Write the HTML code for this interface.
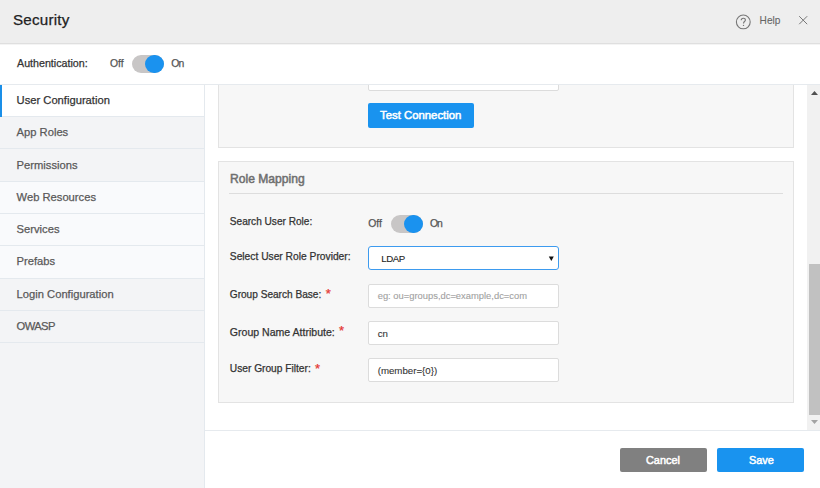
<!DOCTYPE html>
<html><head><meta charset="utf-8"><title>Security</title>
<style>
html,body{-webkit-font-smoothing:antialiased;margin:0;padding:0;width:820px;height:488px;overflow:hidden;background:#fff;font-family:"Liberation Sans", sans-serif;}
.r{position:absolute;}
.t{position:absolute;white-space:pre;line-height:1;}
</style></head><body>
<div class="r" style="left:0px;top:0px;width:820px;height:43px;background:#eeeeee"></div>
<div class="r" style="left:0px;top:43px;width:820px;height:1px;background:#dfdfdf"></div>
<div class="r" style="left:0px;top:44px;width:820px;height:1px;background:#f4f4f4"></div>
<div class="t" style="left:13px;top:12.43px;font-size:15.2px;color:#222;font-weight:400;letter-spacing:0.2px;-webkit-text-stroke:0.25px #222;">Security</div>
<svg class="r" style="left:735px;top:14px" width="17" height="17" viewBox="0 0 17 17"><circle cx="8.3" cy="7.9" r="6.9" fill="none" stroke="#777" stroke-width="1.1"/><path d="M6.2 6.3 C6.2 4.9 7.2 4.2 8.3 4.2 C9.5 4.2 10.4 5 10.4 6.1 C10.4 7.5 8.5 7.6 8.5 9.4" fill="none" stroke="#777" stroke-width="1.1"/><circle cx="8.5" cy="11.4" r="0.7" fill="#777"/></svg>
<div class="t" style="left:759.6px;top:16.15px;font-size:10.1px;color:#666;font-weight:400;-webkit-text-stroke:0.1px #666;">Help</div>
<svg class="r" style="left:798px;top:15px" width="11" height="11" viewBox="0 0 11 11"><path d="M1.2 1.2 L9.2 9.2 M9.2 1.2 L1.2 9.2" stroke="#777" stroke-width="1" fill="none"/></svg>
<div class="r" style="left:0px;top:84px;width:820px;height:1px;background:#e6eaee"></div>
<div class="t" style="left:17px;top:57.84px;font-size:10.7px;color:#333;font-weight:400;-webkit-text-stroke:0.25px #333;">Authentication:</div>
<div class="t" style="left:110px;top:59.00px;font-size:10.4px;color:#555;font-weight:400;-webkit-text-stroke:0.25px #555;">Off</div>
<div class="r" style="left:131.5px;top:55px;width:32.0px;height:18px;background:#c8c6c6;border-radius:9px"></div>
<div class="r" style="left:145.0px;top:54.8px;width:18.599999999999994px;height:18.60000000000001px;background:#1a92ef;border-radius:50%"></div>
<div class="t" style="left:171.3px;top:59.00px;font-size:10.4px;color:#555;font-weight:400;letter-spacing:-1.0px;-webkit-text-stroke:0.25px #555;">On</div>
<div class="r" style="left:0px;top:85px;width:204px;height:403px;background:#f3f4f6"></div>
<div class="r" style="left:204px;top:85px;width:1px;height:403px;background:#e4e9ee"></div>
<div class="r" style="left:0px;top:85px;width:204px;height:31px;background:#ffffff"></div>
<div class="r" style="left:0px;top:116px;width:204px;height:1px;background:#e4e9ee"></div>
<div class="t" style="left:16.6px;top:95.12px;font-size:11.2px;color:#333;font-weight:400;-webkit-text-stroke:0.25px #333;">User Configuration</div>
<div class="r" style="left:0px;top:117px;width:204px;height:31px;background:#f3f4f6"></div>
<div class="r" style="left:0px;top:148px;width:204px;height:1px;background:#e4e9ee"></div>
<div class="t" style="left:16.6px;top:127.37px;font-size:11.2px;color:#595959;font-weight:400;-webkit-text-stroke:0.25px #595959;">App Roles</div>
<div class="r" style="left:0px;top:149px;width:204px;height:32px;background:#f3f4f6"></div>
<div class="r" style="left:0px;top:181px;width:204px;height:1px;background:#e4e9ee"></div>
<div class="t" style="left:16.6px;top:159.62px;font-size:11.2px;color:#595959;font-weight:400;-webkit-text-stroke:0.25px #595959;">Permissions</div>
<div class="r" style="left:0px;top:182px;width:204px;height:31px;background:#f9fafc"></div>
<div class="r" style="left:0px;top:213px;width:204px;height:1px;background:#e4e9ee"></div>
<div class="t" style="left:16.6px;top:191.87px;font-size:11.2px;color:#595959;font-weight:400;-webkit-text-stroke:0.25px #595959;">Web Resources</div>
<div class="r" style="left:0px;top:214px;width:204px;height:31px;background:#f9fafc"></div>
<div class="r" style="left:0px;top:245px;width:204px;height:1px;background:#e4e9ee"></div>
<div class="t" style="left:16.6px;top:224.12px;font-size:11.2px;color:#595959;font-weight:400;-webkit-text-stroke:0.25px #595959;">Services</div>
<div class="r" style="left:0px;top:246px;width:204px;height:32px;background:#f9fafc"></div>
<div class="r" style="left:0px;top:278px;width:204px;height:1px;background:#e4e9ee"></div>
<div class="t" style="left:16.6px;top:256.37px;font-size:11.2px;color:#595959;font-weight:400;-webkit-text-stroke:0.25px #595959;">Prefabs</div>
<div class="r" style="left:0px;top:279px;width:204px;height:31px;background:#f3f4f6"></div>
<div class="r" style="left:0px;top:310px;width:204px;height:1px;background:#e4e9ee"></div>
<div class="t" style="left:16.6px;top:288.62px;font-size:11.2px;color:#595959;font-weight:400;-webkit-text-stroke:0.25px #595959;">Login Configuration</div>
<div class="r" style="left:0px;top:311px;width:204px;height:31px;background:#f3f4f6"></div>
<div class="r" style="left:0px;top:342px;width:204px;height:1px;background:#e4e9ee"></div>
<div class="t" style="left:16.6px;top:320.87px;font-size:11.2px;color:#595959;font-weight:400;letter-spacing:-0.6px;-webkit-text-stroke:0.25px #595959;">OWASP</div>
<div class="r" style="left:0px;top:85px;width:2px;height:32px;background:#1a8fe8"></div>
<div class="r" style="left:205px;top:85px;width:602px;height:345px;background:#fff"></div>
<div class="r" style="left:0;top:85px;width:820px;height:63px;overflow:hidden"><div class="r" style="left:218px;top:-25px;width:576px;height:88px;background:#f7f7f7;border:1px solid #e3e3e3;box-sizing:border-box"></div>
<div class="r" style="left:368px;top:-18px;width:191px;height:24px;background:#fff;border:1px solid #dcdcdc;border-radius:2px;box-sizing:border-box"></div>
</div><div class="r" style="left:368px;top:103.2px;width:106px;height:24.39999999999999px;background:#1993ef;border-radius:2px"></div>
<div class="t" style="left:380px;top:109.69px;font-size:11.35px;color:#fff;font-weight:400;-webkit-text-stroke:0.5px #fff;">Test Connection</div>
<div class="r" style="left:218px;top:161px;width:576px;height:242px;background:#f7f7f7;border:1px solid #e3e3e3;box-sizing:border-box"></div>
<div class="t" style="left:230px;top:173.16px;font-size:12.1px;color:#6f6f6f;font-weight:400;-webkit-text-stroke:0.5px #6f6f6f;">Role Mapping</div>
<div class="r" style="left:229px;top:193px;width:554px;height:1px;background:#dddddd"></div>
<div class="t" style="left:229.8px;top:217.35px;font-size:10.1px;color:#333;font-weight:400;-webkit-text-stroke:0.25px #333;">Search User Role:</div>
<div class="t" style="left:368.2px;top:218.80px;font-size:10.4px;color:#555;font-weight:400;-webkit-text-stroke:0.25px #555;">Off</div>
<div class="r" style="left:390.5px;top:215px;width:32.0px;height:18px;background:#c8c6c6;border-radius:9px"></div>
<div class="r" style="left:404.0px;top:214.8px;width:18.600000000000023px;height:18.599999999999994px;background:#1a92ef;border-radius:50%"></div>
<div class="t" style="left:430px;top:218.80px;font-size:10.4px;color:#555;font-weight:400;letter-spacing:-1.0px;-webkit-text-stroke:0.25px #555;">On</div>
<div class="t" style="left:229.8px;top:252.12px;font-size:10.25px;color:#333;font-weight:400;-webkit-text-stroke:0.25px #333;">Select User Role Provider:</div>
<div class="r" style="left:368px;top:246px;width:191px;height:24px;background:#fff;border:1.5px solid #3d9bef;border-radius:3px;box-sizing:border-box"></div>
<div class="t" style="left:381.2px;top:253.99px;font-size:9.7px;color:#222;font-weight:400;letter-spacing:-0.45px;-webkit-text-stroke:0.1px #222;">LDAP</div>
<svg class="r" style="left:547.5px;top:255.5px" width="7" height="6" viewBox="0 0 7 6"><path d="M0.8 0.6 L5.8 0.6 L3.3 4.9 Z" fill="#111"/></svg>
<div class="t" style="left:229.8px;top:289.85px;font-size:10.1px;color:#333;font-weight:400;-webkit-text-stroke:0.25px #333;">Group Search Base:</div>
<div class="t" style="left:325.7px;top:287.20px;font-size:13px;color:#e53935;font-weight:400;-webkit-text-stroke:0.25px #e53935;">*</div>
<div class="r" style="left:368px;top:284px;width:191px;height:24px;background:#fff;border:1px solid #dcdcdc;border-radius:2px;box-sizing:border-box"></div>
<div class="t" style="left:377.7px;top:291.24px;font-size:9.4px;color:#9e9e9e;font-weight:400;-webkit-text-stroke:0.1px #aaa;">eg: ou=groups,dc=example,dc=com</div>
<div class="t" style="left:229.8px;top:326.67px;font-size:10.55px;color:#333;font-weight:400;-webkit-text-stroke:0.25px #333;">Group Name Attribute:</div>
<div class="t" style="left:339.1px;top:324.40px;font-size:13px;color:#e53935;font-weight:400;-webkit-text-stroke:0.25px #e53935;">*</div>
<div class="r" style="left:368px;top:321px;width:191px;height:24px;background:#fff;border:1px solid #dcdcdc;border-radius:2px;box-sizing:border-box"></div>
<div class="t" style="left:377.7px;top:329.09px;font-size:9.7px;color:#333;font-weight:400;-webkit-text-stroke:0.1px #333;">cn</div>
<div class="t" style="left:229.8px;top:364.17px;font-size:10.2px;color:#333;font-weight:400;-webkit-text-stroke:0.25px #333;">User Group Filter:</div>
<div class="t" style="left:315.1px;top:361.60px;font-size:13px;color:#e53935;font-weight:400;-webkit-text-stroke:0.25px #e53935;">*</div>
<div class="r" style="left:368px;top:358px;width:191px;height:24px;background:#fff;border:1px solid #dcdcdc;border-radius:2px;box-sizing:border-box"></div>
<div class="t" style="left:377.7px;top:366.09px;font-size:9.7px;color:#333;font-weight:400;-webkit-text-stroke:0.1px #333;">(member={0})</div>
<div class="r" style="left:807px;top:85px;width:15px;height:345px;background:#f1f1f1"></div>
<div class="r" style="left:809px;top:264px;width:11px;height:151px;background:#c1c1c1"></div>
<svg class="r" style="left:810px;top:90px" width="9" height="6" viewBox="0 0 9 6"><path d="M1 5 L4.5 1 L8 5 Z" fill="#505050"/></svg>
<svg class="r" style="left:810px;top:419px" width="9" height="6" viewBox="0 0 9 6"><path d="M1 1 L4.5 5 L8 1 Z" fill="#a3a3a3"/></svg>
<div class="r" style="left:205px;top:430px;width:615px;height:1px;background:#e6eaee"></div>
<div class="r" style="left:205px;top:431px;width:615px;height:57px;background:#fff"></div>
<div class="r" style="left:620px;top:448px;width:87px;height:24px;background:#808080;border-radius:2px"></div>
<div class="t" style="left:646px;top:454.67px;font-size:10.9px;color:#fff;font-weight:400;-webkit-text-stroke:0.5px #fff;">Cancel</div>
<div class="r" style="left:717px;top:448px;width:87px;height:24px;background:#1993ef;border-radius:2px"></div>
<div class="t" style="left:749px;top:454.67px;font-size:10.9px;color:#fff;font-weight:400;-webkit-text-stroke:0.5px #fff;">Save</div>
</body></html>
